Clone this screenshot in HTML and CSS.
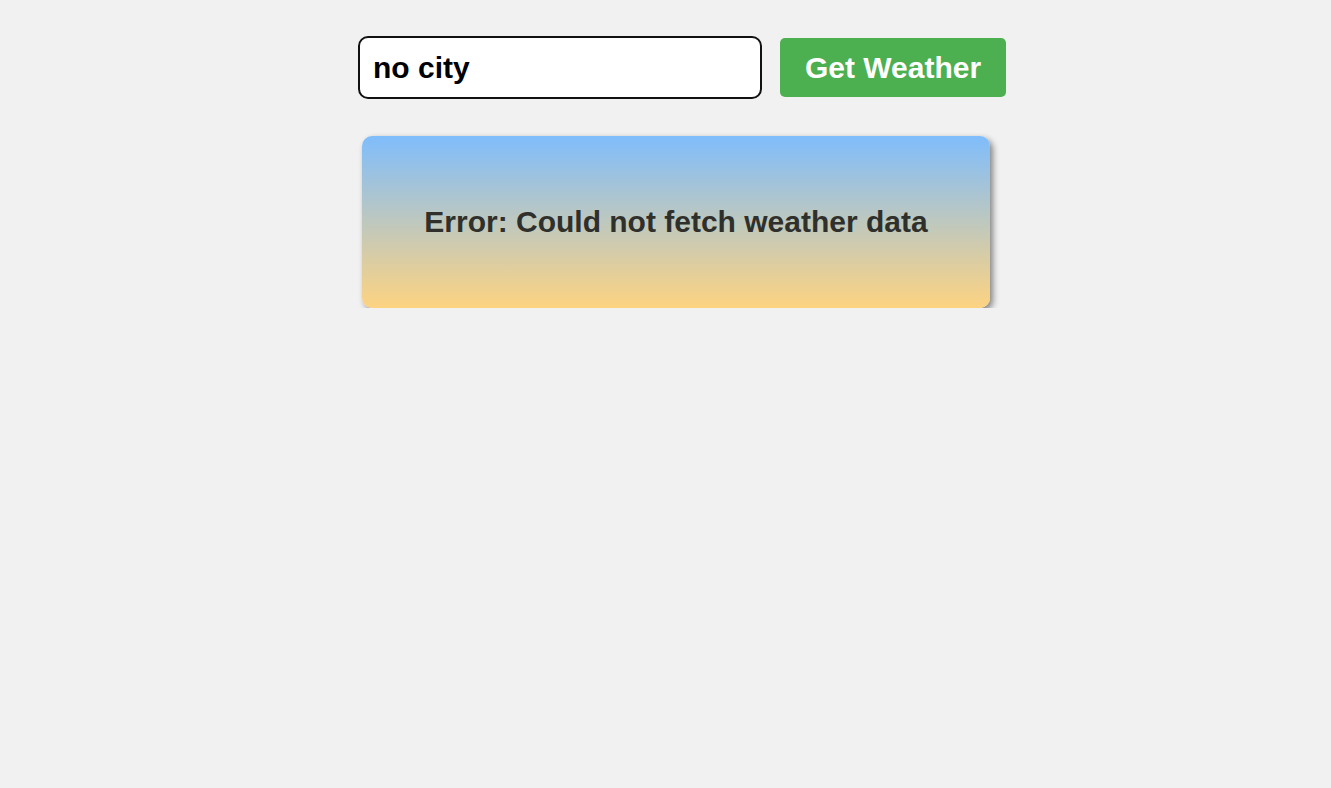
FILE: index.html
```html
<!DOCTYPE html>
<html>
<head>
<meta charset="utf-8">
<link rel="stylesheet" href="styles.css">
</head>
<body>
<main class="app">
  <div class="search">
    <input class="city-input" type="text" value="no city">
    <button class="fetch-btn">Get Weather</button>
  </div>
  <div class="card">
    <p class="error">Error: Could not fetch weather data</p>
  </div>
</main>
</body>
</html>
```
FILE: styles.css
```css
html, body {
  margin: 0;
  padding: 0;
  background: #f1f1f1;
  font-family: "Liberation Sans", Arial, sans-serif;
}
.app {
  padding-top: 36px;
  padding-left: 358px;
  display: flex;
  flex-direction: column;
  align-items: flex-start;
}
.search {
  display: flex;
  align-items: center;
  gap: 18px;
}
.city-input {
  box-sizing: border-box;
  width: 404px;
  height: 63px;
  padding: 0 13px;
  border: 2px solid #111;
  border-radius: 10px;
  background: #fff;
  font-family: "Liberation Sans", Arial, sans-serif;
  font-size: 30px;
  font-weight: bold;
  color: #000;
  outline: none;
}
.fetch-btn {
  box-sizing: border-box;
  width: 226px;
  height: 59px;
  border: none;
  border-radius: 5px;
  background: #4caf50;
  color: #fff;
  font-family: "Liberation Sans", Arial, sans-serif;
  font-size: 30px;
  font-weight: bold;
  padding: 0;
}
.card {
  box-sizing: border-box;
  margin-top: 37px;
  margin-left: 4px;
  width: 628px;
  height: 172px;
  border-radius: 10px;
  background: linear-gradient(to bottom, #7fbdfc, #fdd381);
  box-shadow: 3px 3px 6px rgba(0, 0, 0, 0.45);
  display: flex;
  align-items: center;
  justify-content: center;
}
.error {
  margin: 0;
  font-size: 30px;
  font-weight: bold;
  color: #2f302c;
}
```
